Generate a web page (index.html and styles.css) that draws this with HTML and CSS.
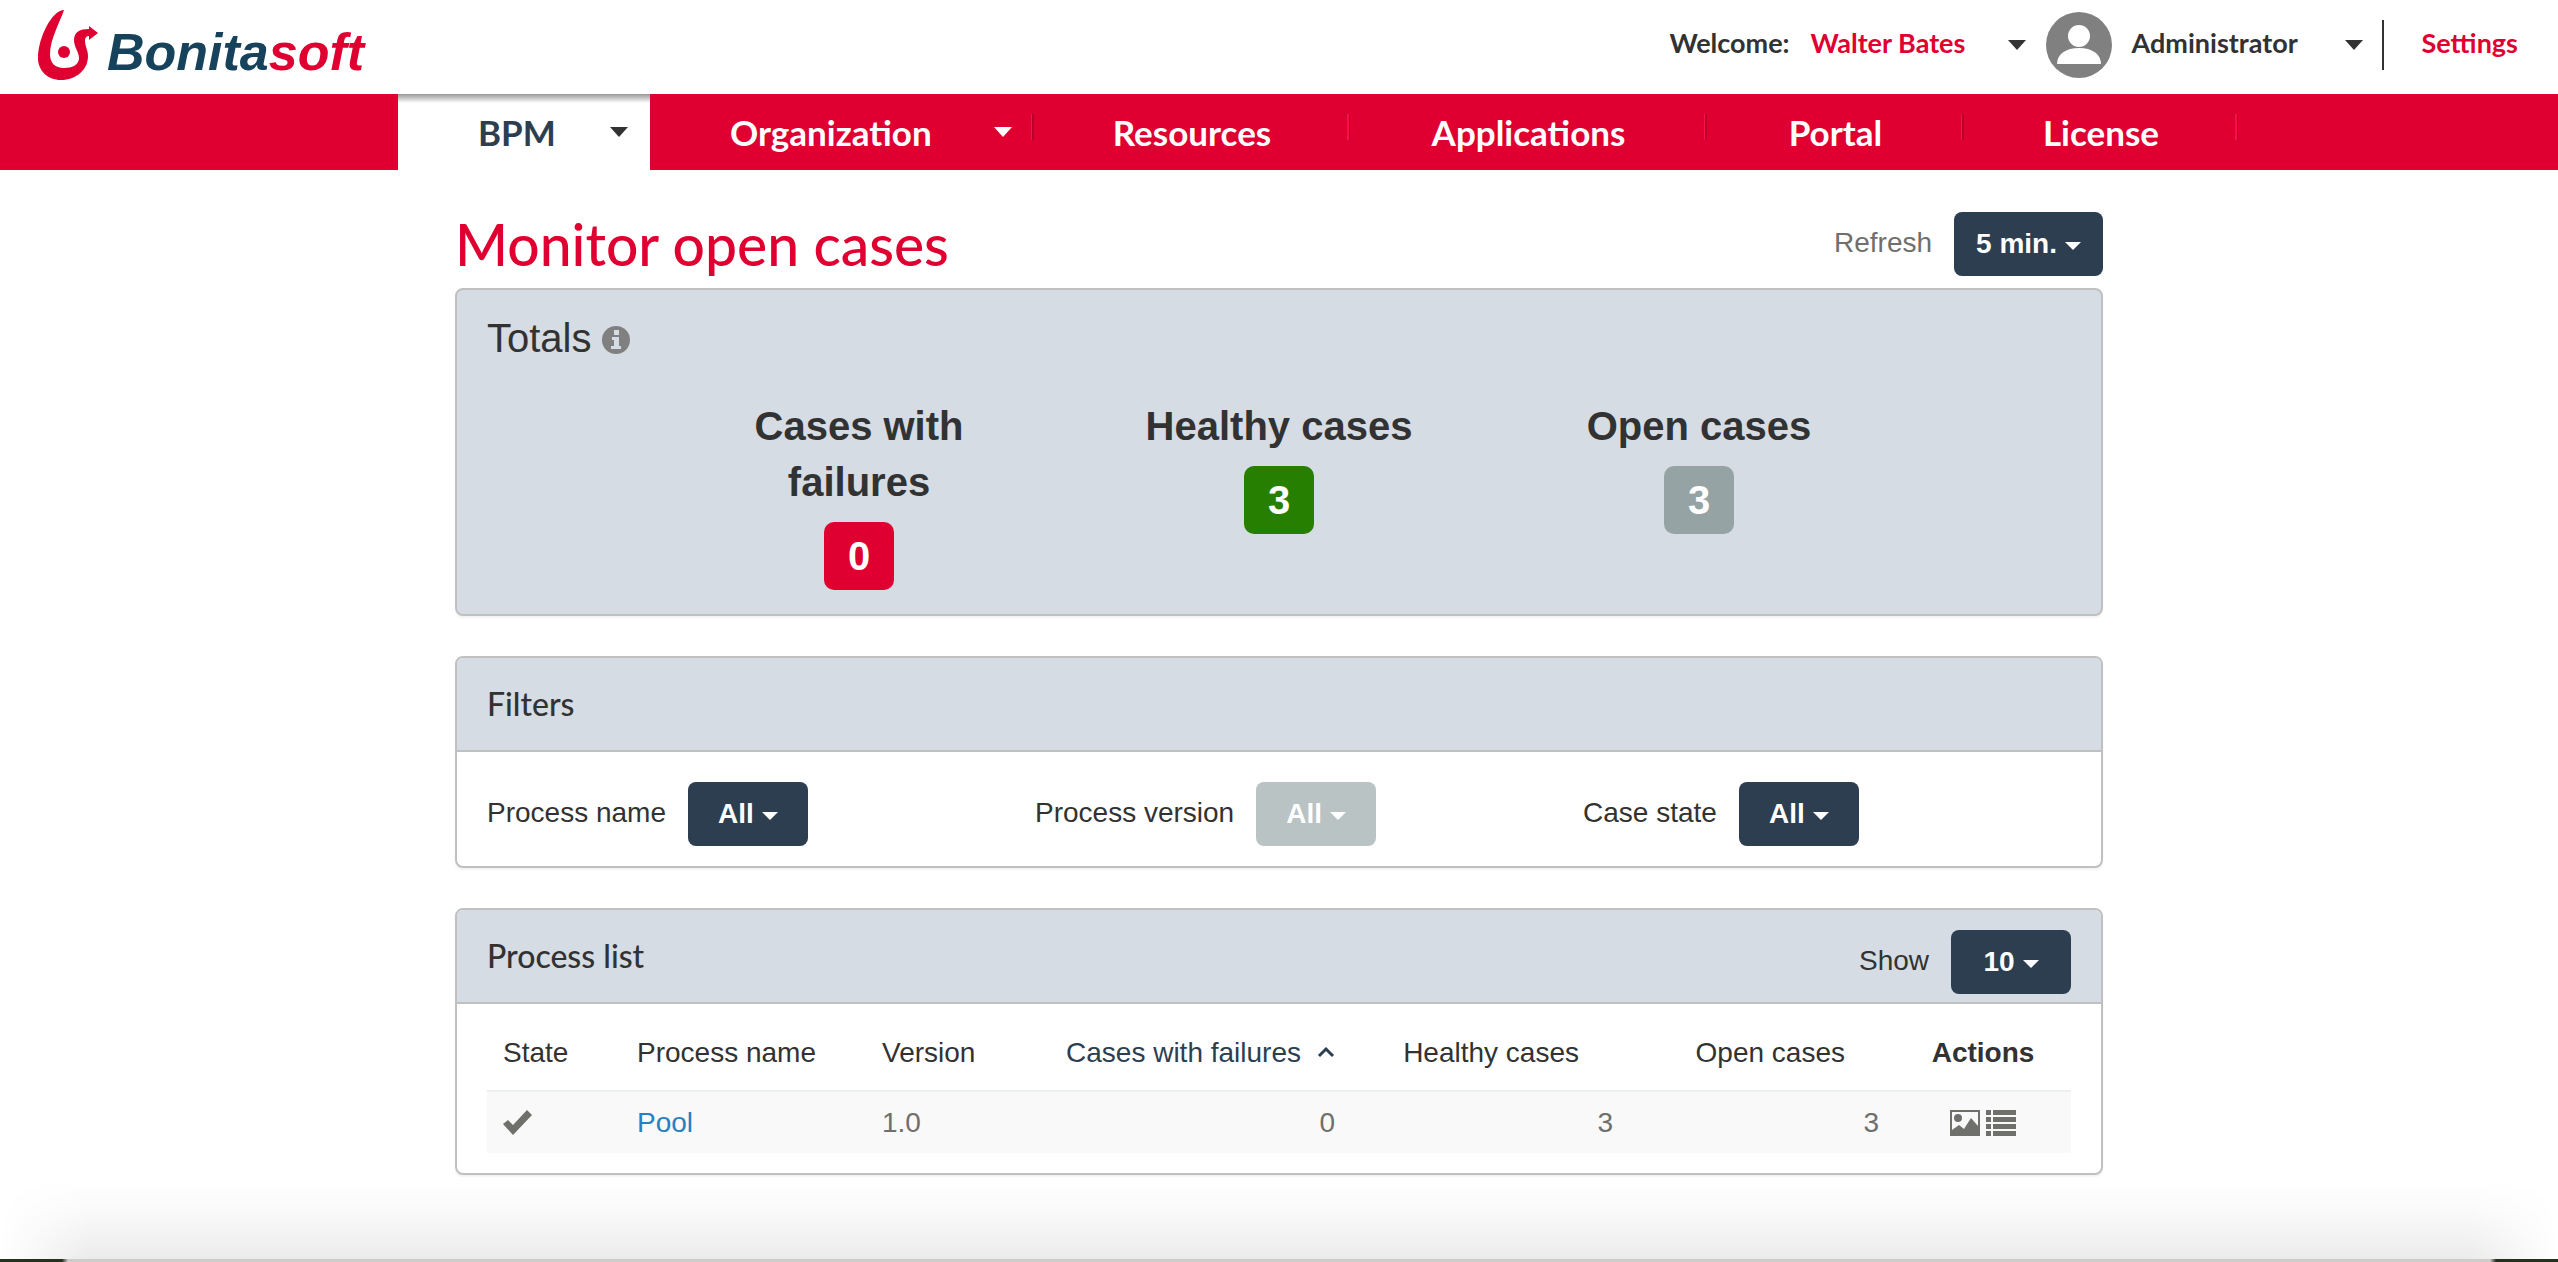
FILE: index.html
```html
<!DOCTYPE html>
<html lang="en">
<head>
<meta charset="utf-8">
<title>Monitor open cases</title>
<link rel="stylesheet" href="styles.css">
</head>
<body>
<header class="topbar">
  <a class="logo" href="#" aria-label="Bonitasoft">
    <svg class="logo-mark" viewBox="0 0 60 70" aria-hidden="true"><path d="M26 0C14 0 0 28 0 48C0 61 10 70 23 70C38 70 50 60 50 46C50 40 47 36 47 31C47 27 49 26 51 26L51 30L60 23L51 16L51 19C42 19 36 22 36 30C36 37 41 42 41 48C41 55 34 58 26 58C17 58 12 53 12 44C12 29 22 12 26 0Z"/><circle cx="26" cy="42" r="6"/></svg>
    <span class="logo-text">Bonita<span class="logo-soft">soft</span></span>
  </a>
  <div class="user">
    <span class="welcome">Welcome:</span>
    <button class="user-menu user-name" type="button"><span>Walter Bates</span><i class="arrow"></i></button>
    <svg class="avatar" viewBox="0 0 66 66" aria-hidden="true"><circle cx="33" cy="33" r="33" fill="#808080"/><ellipse cx="33" cy="24" rx="11" ry="11" fill="#fff"/><path d="M11 52C11 42 20 36 33 36C46 36 55 42 55 52Z" fill="#fff"/></svg>
    <button class="user-menu profile" type="button"><span>Administrator</span><i class="arrow"></i></button>
    <a class="settings" href="#">Settings</a>
  </div>
</header>
<nav class="menu">
  <a class="item drop active" href="#"><span>BPM</span><i class="arrow"></i></a>
  <a class="item drop" href="#"><span>Organization</span><i class="arrow"></i></a>
  <a class="item" href="#">Resources</a>
  <a class="item" href="#">Applications</a>
  <a class="item" href="#">Portal</a>
  <a class="item" href="#">License</a>
</nav>
<main class="content">
  <div class="title-row">
    <h1>Monitor open cases</h1>
    <div class="field muted"><span id="refresh">Refresh</span><button class="btn" type="button" aria-describedby="refresh">5 min.<i class="caret"></i></button></div>
  </div>
  <section class="panel totals">
    <h2 class="totals-title">Totals
      <svg class="info" viewBox="0 0 28 28" aria-hidden="true"><circle cx="14" cy="14" r="14" fill="#808080"/><path d="M12 4h5v5h-5zM10 11h7v9h2v3H9v-3h3v-6h-2z" fill="#d5dce3"/></svg>
    </h2>
    <div class="counts">
      <div class="count"><h3>Cases with failures</h3><span class="badge fail">0</span></div>
      <div class="count"><h3>Healthy cases</h3><span class="badge ok">3</span></div>
      <div class="count"><h3>Open cases</h3><span class="badge open">3</span></div>
    </div>
  </section>
  <section class="panel">
    <div class="panel-head"><h2>Filters</h2></div>
    <div class="filters">
      <div class="field"><span id="pname">Process name</span><button class="btn" type="button" aria-describedby="pname">All<i class="caret"></i></button></div>
      <div class="field"><span id="pver">Process version</span><button class="btn" type="button" disabled aria-describedby="pver">All<i class="caret"></i></button></div>
      <div class="field"><span id="cstate">Case state</span><button class="btn" type="button" aria-describedby="cstate">All<i class="caret"></i></button></div>
    </div>
  </section>
  <section class="panel">
    <div class="panel-head">
      <h2>Process list</h2>
      <div class="field show"><span id="show">Show</span><button class="btn" type="button" aria-describedby="show">10<i class="caret"></i></button></div>
    </div>
    <div class="list">
      <table>
        <colgroup><col class="c-state"><col class="c-name"><col class="c-version"><col class="c-fail"><col class="c-ok"><col class="c-open"><col class="c-act"></colgroup>
        <thead>
          <tr><th>State</th><th>Process name</th><th>Version</th>
            <th class="num sorted">Cases with failures<svg class="chev" viewBox="0 0 18 12" aria-hidden="true"><path d="M2 10L9 3L16 10"/></svg></th>
            <th class="num sortable">Healthy cases</th><th class="num sortable">Open cases</th><th class="actions">Actions</th></tr>
        </thead>
        <tbody>
          <tr><td><svg class="check" viewBox="0 0 30 26" aria-hidden="true"><path d="M0 14L5 10L10 15L24 0L29 5L10 25Z"/></svg></td><td><a href="#">Pool</a></td><td>1.0</td><td class="num">0</td><td class="num">3</td><td class="num">3</td>
            <td><div class="icons">
              <button type="button" class="icon" aria-label="Diagram"><svg viewBox="0 0 30 26"><path fill-rule="evenodd" d="M0 0H30V26H0ZM2 2V20L9 15L14 19L21 8L28 16V2Z"/><circle cx="8" cy="8" r="4"/></svg></button>
              <button type="button" class="icon" aria-label="Cases"><svg viewBox="0 0 30 26"><path d="M0 0h5v5H0zM7 0h23v5H7zM0 7h5v5H0zM7 7h23v5H7zM0 14h5v5H0zM7 14h23v5H7zM0 21h5v5H0zM7 21h23v5H7z"/></svg></button>
            </div></td></tr>
        </tbody>
      </table>
    </div>
  </section>
</main>
<div class="shade"></div>
<div class="edge"></div>
</body>
</html>
```
FILE: styles.css
```css
* { box-sizing: border-box; }
body { margin: 0; min-height: 100vh; position: relative; background: #fff; color: #323232; font: 28px/40px "Liberation Sans", Arial, sans-serif; overflow: hidden; }
h1, h2, h3 { margin: 0; font-weight: 400; }
a { text-decoration: none; color: #2780c0; }
button { font: inherit; border: 0; background: none; padding: 0; color: inherit; }

.topbar { height: 94px; padding: 0 40px 0 38px; display: flex; justify-content: space-between; }
.logo { display: flex; color: #16425b; padding-top: 10px; }
.logo-mark { width: 60px; height: 70px; fill: #df0031; }
.logo-text { font: italic 700 52px/84px "Liberation Sans", Arial, sans-serif; margin-left: 9px; }
.logo-soft { color: #df0031; }
.user { display: flex; align-items: center; height: 90px; font: 700 27px/40px Lato, sans-serif; }
.welcome, .user-menu span { padding-bottom: 4px; }
.user-menu { display: flex; align-items: center; justify-content: space-between; }
.user-name { width: 215px; margin: 0 20px 0 21px; color: #df0031; }
.profile { width: 231px; margin-left: 20px; }
.avatar { width: 66px; height: 66px; }
.arrow { width: 0; height: 0; border: 9px solid transparent; border-top: 10px solid #323232; border-bottom: 0; }
.settings { color: #df0031; border-left: 2px solid #323232; line-height: 46px; padding: 0 0 4px 38px; margin-left: 19px; }

.menu { display: grid; grid-template-columns: 252px 384px 316px 357px 257px 274px; background: #df0031; height: 76px; padding-left: 398px; font: 700 35px/76px Lato, sans-serif; }
.item { color: #fff; display: flex; justify-content: center; align-items: center; background: linear-gradient(90deg, #f8104a 50%, #b8002a 50%) right 20px / 3px 26px no-repeat; }
.item.drop { justify-content: space-between; padding: 0 22px 0 80px; }
.item .arrow { border-top-color: #fff; }
.item.active { color: #2c3e50; background: linear-gradient(#999, #fff 9px); }
.item.active .arrow { border-top-color: #323232; }

.content { width: 1648px; max-width: 100%; margin: 0 auto; }
.title-row { display: flex; justify-content: space-between; height: 118px; padding-top: 42px; }
h1 { font: 500 57px/64px Lato, sans-serif; color: #df0031; }
.field { display: flex; align-items: center; gap: 22px; height: 64px; }
.field span { padding-bottom: 3px; }
.muted { color: #6f6f6c; }
.btn { display: flex; align-items: center; justify-content: center; gap: 8px; min-width: 120px; height: 64px; padding: 0 22px; border-radius: 8px; background: #2c3e50; color: #fff; font-weight: 700; }
.btn:disabled { background: #b9c3c4; }
.caret { border: 8px solid transparent; border-top: 8px solid #fff; border-bottom: 0; margin-top: 4px; }

.panel { border: 2px solid #c0c0c0; border-radius: 8px; margin-bottom: 40px; background: #fff; box-shadow: 0 2px 2px rgba(0,0,0,.05); }
.totals { background: #d5dce3; height: 328px; padding: 28px 30px; }
.totals-title { font-size: 40px; line-height: 40px; display: flex; align-items: center; gap: 10px; }
.info { width: 28px; height: 28px; margin-top: 4px; }
.counts { display: grid; grid-template-columns: repeat(3, 420px); justify-content: center; margin-top: 40px; text-align: center; font-weight: 700; font-size: 40px; line-height: 56px; }
.count { padding: 0 30px; }
.count h3 { font: inherit; }
.badge { display: block; width: 70px; height: 68px; line-height: 68px; margin: 12px auto 0; border-radius: 10px; color: #fff; }
.fail { background: #df0031; }
.ok { background: #267f00; }
.open { background: #95a3a4; }
.panel-head { display: flex; justify-content: space-between; align-items: center; height: 94px; padding: 0 30px; background: #d5dce3; border-bottom: 2px solid #c0c0c0; border-radius: 6px 6px 0 0; }
.panel-head h2 { font: 500 32px/40px Lato, sans-serif; }
.show { margin-top: 12px; }
.filters { display: grid; grid-template-columns: repeat(3, 1fr); padding: 30px 0 20px 30px; margin-right: -30px; }

.list { padding: 20px 30px; }
table { width: 100%; border-collapse: collapse; table-layout: fixed; }
.c-state { width: 134px; } .c-name { width: 245px; } .c-version { width: 184px; } .c-fail { width: 301px; } .c-ok { width: 278px; } .c-open { width: 266px; } .c-act { width: 176px; }
th, td { padding: 0 16px; text-align: left; font-weight: 400; white-space: nowrap; }
th { height: 67px; padding-bottom: 8px; }
td { height: 62px; color: #6f6f6c; background: #f9f9f9; border-top: 2px solid #ecf0f1; }
.num { text-align: right; }
.sorted { color: #2c3e50; }
.chev { width: 18px; height: 12px; margin-left: 16px; fill: none; stroke: #2c3e50; stroke-width: 3; vertical-align: 4px; }
.sortable { padding-right: 50px; }
.actions { font-weight: 700; text-align: center; }
.check { width: 30px; height: 26px; display: block; fill: #6f6f6c; }
.icons { display: flex; justify-content: center; gap: 6px; }
.icon svg { display: block; width: 30px; height: 26px; fill: #6f6f6c; }

.shade { position: absolute; left: 0; right: 0; bottom: 3px; height: 80px; background: linear-gradient(rgba(0,0,0,0), rgba(0,0,0,.015) 35%, rgba(0,0,0,.08)); mask-image: linear-gradient(90deg, transparent, #000 90px, #000 calc(100% - 90px), transparent); }
.edge { position: absolute; left: 0; right: 0; bottom: 0; height: 3px; background: linear-gradient(90deg, #26301f 62px, #d0cccc 68px, #d0cccc calc(100% - 68px), #26301f calc(100% - 62px)); }
```
